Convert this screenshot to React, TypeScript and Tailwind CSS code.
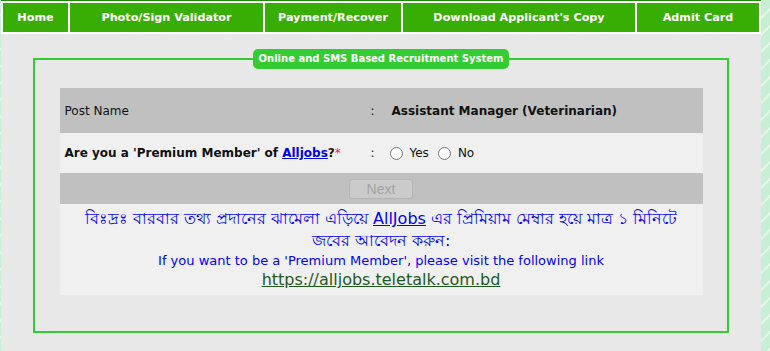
import React from 'react'

const navItems = [
  { label: 'Home', w: 'w-[65px]' },
  { label: 'Photo/Sign Validator', w: 'w-[193px]' },
  { label: 'Payment/Recover', w: 'w-[136px]' },
  { label: "Download Applicant's Copy", w: 'w-[232px]' },
  { label: 'Admit Card', w: 'w-[122px]' },
]

export default function App() {
  return (
    <div className="min-h-screen bg-[repeating-linear-gradient(135deg,#c6efd4_0px,#c6efd4_10px,#e2f7e8_10px,#e2f7e8_12px)] font-['DejaVu_Sans',Verdana,sans-serif]">
      <div className="ml-[1px] w-[760px] min-h-screen bg-[#e8e8e8]">
        {/* top menu */}
        <div className="border-t border-[#1e8a00] bg-white p-[2px] flex gap-[2px]">
          {navItems.map((item) => (
            <div
              key={item.label}
              className={`${item.w} h-[29px] pt-[1px] bg-[#38ae04] flex items-center justify-center text-white font-bold text-[11.2px]`}
            >
              {item.label}
            </div>
          ))}
        </div>

        <fieldset className="mx-auto mt-[15px] w-[696px] border-2 border-[#33cc33] pt-[19px] pb-[36px]">
          <legend className="mx-auto h-[20px] px-[6px] rounded-[5px] bg-[#33cc33] text-white font-bold text-[10px] leading-[20px]">
            Online and SMS Based Recruitment System
          </legend>

          <div className="mx-auto w-[643px] text-[12px] text-[#111]">
            <div className="flex items-center h-[45px] bg-[#c0c0c0]">
              <div className="w-[304px] pl-[5px]">Post Name</div>
              <div className="w-[23px] pl-[7px]">:</div>
              <div className="flex-1 pl-[5px] font-bold">Assistant Manager (Veterinarian)</div>
            </div>

            <div className="flex items-center h-[40px] bg-[#f0f0f0]">
              <div className="w-[304px] pl-[5px] font-bold">
                Are you a 'Premium Member' of{' '}
                <a href="#" className="text-[#0000ee] underline">Alljobs</a>?
                <span className="text-[#ff1a4d] font-normal">*</span>
              </div>
              <div className="w-[23px] pl-[7px]">:</div>
              <div className="flex-1 flex items-center pl-[3px]">
                <label className="flex items-center">
                  <input type="radio" name="pm" className="m-0 w-[13px] h-[13px]" />
                  <span className="ml-[7px]">Yes</span>
                </label>
                <label className="flex items-center ml-[9px]">
                  <input type="radio" name="pm" className="m-0 w-[13px] h-[13px]" />
                  <span className="ml-[7px]">No</span>
                </label>
              </div>
            </div>

            <div className="flex items-center justify-center h-[31px] bg-[#c0c0c0]">
              <button
                disabled
                className="w-[64px] h-[20px] rounded-[3px] border border-[#b4b4b4] bg-[#cbcbcb] text-[#a3a3a3] text-[14px] leading-none font-['Liberation_Sans',Arial,sans-serif]"
              >
                Next
              </button>
            </div>

            <div className="bg-[#f0f0f0] pt-[4px] pb-[5px] text-center text-[#0000ff]">
              <p className="text-[16px] leading-[22px] px-[8px] font-normal">
                বিঃদ্রঃ বারবার তথ্য প্রদানের ঝামেলা এড়িয়ে{' '}
                <a href="#" className="underline font-normal font-['DejaVu_Sans',sans-serif]">AllJobs</a>{' '}
                এর প্রিমিয়াম মেম্বার হয়ে মাত্র ১ মিনিটে জবের আবেদন করুন:
              </p>
              <p className="text-[13px] leading-[18px]">
                If you want to be a 'Premium Member', please visit the following link
              </p>
              <a href="#" className="block text-[16px] leading-[20px] text-[#1e5a1e] underline">
                https://alljobs.teletalk.com.bd
              </a>
            </div>
          </div>
        </fieldset>
      </div>
    </div>
  )
}
